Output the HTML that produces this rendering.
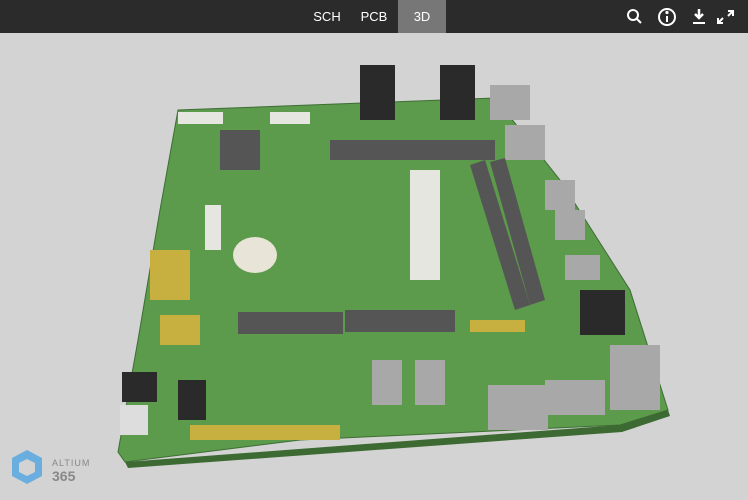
<!DOCTYPE html>
<html><head><style>
body{margin:0;width:748px;height:500px;overflow:hidden;background:#d3d3d3;font-family:"Liberation Sans",sans-serif;position:relative}
.bar{position:absolute;left:0;top:0;width:748px;height:33px;background:#2b2b2b;color:#fff;font-size:13px}
.tab{position:absolute;top:0;height:33px;line-height:33px;text-align:center}
</style></head><body>
<div class="bar">
<div class="tab" style="left:307px;width:40px">SCH</div>
<div class="tab" style="left:354px;width:40px">PCB</div>
<div class="tab" style="left:398px;width:48px;background:#777">3D</div>
<svg style="position:absolute;left:620px;top:6px" width="120" height="22" viewBox="0 0 120 22" fill="none" stroke="#fff" stroke-width="2">
<circle cx="13" cy="9" r="5"/><line x1="17" y1="13" x2="21" y2="17"/>
<circle cx="47" cy="11" r="8"/><line x1="47" y1="10" x2="47" y2="16"/><circle cx="47" cy="6.5" r="0.6" fill="#fff"/>
<path d="M79 3v9M75 8l4 4 4-4" stroke-width="2.5"/><line x1="73" y1="17" x2="85" y2="17"/>
<path d="M108 5h5v5M113 5l-5 5M103 17h-5v-5M98 17l5-5"/>
</svg>
</div>
<svg style="position:absolute;left:0;top:33px" width="748" height="467" viewBox="0 33 748 467">
<polygon points="178,110 495,98 560,180 630,290 668,410 620,425 300,440 125,462 118,452 138,340 160,210" fill="#5c9a4c" stroke="#3e6e34"/>
<polygon points="125,462 620,425 668,410 670,416 622,432 128,468" fill="#3d6a33"/>
<g fill="#2a2a2a">
<rect x="360" y="65" width="35" height="55"/><rect x="440" y="65" width="35" height="55"/>
<rect x="580" y="290" width="45" height="45"/><rect x="122" y="372" width="35" height="30"/><rect x="178" y="380" width="28" height="40"/>
</g>
<g fill="#a8a8a8">
<rect x="490" y="85" width="40" height="35"/><rect x="505" y="125" width="40" height="35"/><rect x="545" y="180" width="30" height="30"/><rect x="555" y="210" width="30" height="30"/><rect x="565" y="255" width="35" height="25"/>
<rect x="610" y="345" width="50" height="65"/><rect x="488" y="385" width="60" height="45"/><rect x="545" y="380" width="60" height="35"/>
<rect x="372" y="360" width="30" height="45"/><rect x="415" y="360" width="30" height="45"/><rect x="120" y="405" width="28" height="30" fill="#ddd"/>
<ellipse cx="255" cy="255" rx="22" ry="18" fill="#e8e4d8"/>
</g>
<g fill="#e6e6e0">
<rect x="410" y="170" width="30" height="110"/><rect x="205" y="205" width="16" height="45"/>
<rect x="178" y="112" width="45" height="12"/><rect x="270" y="112" width="40" height="12"/>
</g>
<g fill="#555">
<polygon points="470,165 485,160 530,305 515,310"/><polygon points="490,162 505,158 545,300 530,305"/>
<rect x="238" y="312" width="105" height="22"/><rect x="345" y="310" width="110" height="22"/>
<rect x="330" y="140" width="165" height="20"/><rect x="220" y="130" width="40" height="40"/>
</g>
<g fill="#c8b040">
<rect x="150" y="250" width="40" height="50"/><rect x="160" y="315" width="40" height="30"/><rect x="470" y="320" width="55" height="12"/>
<rect x="190" y="425" width="150" height="15"/>
</g>
</svg>
<svg style="position:absolute;left:10px;top:448px" width="34" height="38" viewBox="0 0 34 38">
<polygon points="17,2 32,10 32,28 17,36 2,28 2,10" fill="#6aaee0"/>
<polygon points="17,11 25,15 25,24 17,28 9,24 9,15" fill="#d3d3d3"/>
</svg>
<div style="position:absolute;left:52px;top:458px;font-size:9px;color:#888;letter-spacing:1px">ALTIUM</div>
<div style="position:absolute;left:52px;top:468px;font-size:14px;font-weight:bold;color:#888">365</div>
</body></html>
